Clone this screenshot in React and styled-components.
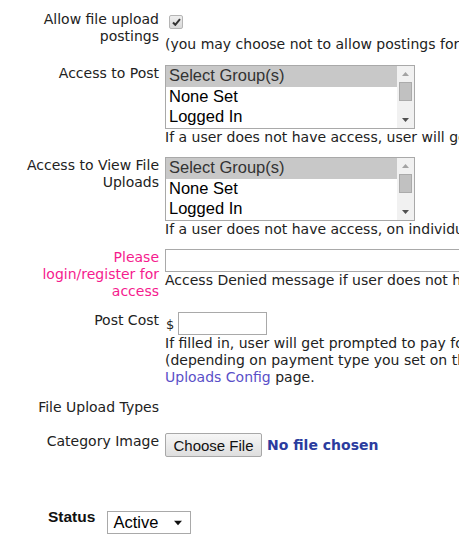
import React from 'react';
import styled, { createGlobalStyle } from 'styled-components';

const GlobalStyle = createGlobalStyle`
  html, body {
    margin: 0;
    padding: 0;
    background: #ffffff;
    overflow: hidden;
  }
  body {
    font-family: "DejaVu Sans", Verdana, sans-serif;
    font-size: 14px;
    line-height: 17px;
    color: #222;
  }
`;

const Page = styled.div`
  width: 900px;
  padding-top: 11px;
`;

const Row = styled.div`
  display: flex;
  align-items: flex-start;
  margin-top: ${({ $mt }) => $mt ?? 11}px;
  &:first-child {
    margin-top: 0;
  }
`;

const Label = styled.div`
  flex: 0 0 159px;
  text-align: right;
  color: ${({ $pink }) => ($pink ? '#f51b8e' : '#222')};
`;

const Value = styled.div`
  margin-left: 6px;
  white-space: nowrap;
`;

const Help = styled.div`
  line-height: 17px;
`;

const Link = styled.a`
  color: #5a4fc8;
  text-decoration: none;
`;

const Check = styled.span`
  display: flex;
  align-items: center;
  justify-content: center;
  width: 12px;
  height: 12px;
  margin: 4px 0 7px 4px;
  border: 1px solid #b5b5b5;
  border-radius: 2px;
  background: linear-gradient(#eeeeee, #d9d9d9);
`;

const ListBox = styled.div`
  display: flex;
  width: 248px;
  height: 62px;
  border: 1px solid #a9a9a9;
  background: #fff;
`;

const Options = styled.div`
  flex: 1;
  display: flex;
  flex-direction: column;
`;

const Option = styled.div`
  height: ${({ $h }) => $h}px;
  line-height: ${({ $h }) => $h - 3}px;
  padding-left: 3px;
  font-family: "Liberation Sans", Arial, sans-serif;
  font-size: 16.5px;
  color: ${({ $selected }) => ($selected ? '#333' : '#000')};
  background: ${({ $selected }) => ($selected ? '#c8c8c8' : 'transparent')};
`;

const Scrollbar = styled.div`
  flex: 0 0 17px;
  display: flex;
  flex-direction: column;
  align-items: center;
  background: #f1f1f1;
`;

const Arrow = styled.div`
  height: 16px;
  display: flex;
  align-items: center;
  justify-content: center;
`;

const Thumb = styled.div`
  flex: 0 0 auto;
  width: 13px;
  height: 19px;
  background: #c1c1c1;
  border: 1px solid #ababab;
  box-sizing: border-box;
`;

const TrackFill = styled.div`
  flex: 1;
`;

const TextInput = styled.div`
  width: ${({ $w }) => $w}px;
  height: 21px;
  border: 1px solid #a9a9a9;
  background: #fff;
`;

const CostLine = styled.div`
  display: flex;
  align-items: flex-start;
`;

const Dollar = styled.span`
  margin: 4px 4px 0 1px;
  font-size: 13px;
  color: #222;
`;

const FileRow = styled.div`
  display: flex;
  align-items: center;
`;

const FileButton = styled.button`
  width: 97px;
  height: 24px;
  padding: 0;
  border: 1px solid #a8a8a8;
  border-radius: 2px;
  background: linear-gradient(#f6f6f6, #dedede);
  font-family: "Liberation Sans", Arial, sans-serif;
  font-size: 15px;
  color: #111;
`;

const NoFile = styled.span`
  margin-left: 5px;
  font-weight: bold;
  font-size: 14px;
  color: #2b3c9e;
`;

const StatusRow = styled.div`
  display: flex;
  align-items: flex-start;
  margin-top: 51px;
  padding-left: 48px;
`;

const StatusLabel = styled.div`
  font-family: "Liberation Sans", Arial, sans-serif;
  font-weight: bold;
  font-size: 15.5px;
  line-height: 18px;
  color: #111;
`;

const Select = styled.div`
  display: flex;
  align-items: center;
  justify-content: space-between;
  margin-left: 12px;
  margin-top: 3px;
  width: 84px;
  height: 23px;
  padding: 0 8px 0 5px;
  box-sizing: border-box;
  border: 1px solid #a9a9a9;
  background: #fff;
  font-family: "Liberation Sans", Arial, sans-serif;
  font-size: 16.5px;
  color: #000;
`;

const Tri = ({ down, color, w = 7, h = 4 }) => (
  <svg width={w} height={h} viewBox="0 0 7 4">
    {down ? <polygon points="0,0 7,0 3.5,4" fill={color} /> : <polygon points="0,4 7,4 3.5,0" fill={color} />}
  </svg>
);

const GroupList = () => (
  <ListBox>
    <Options>
      <Option $selected $h={21}>Select Group(s)</Option>
      <Option $h={21}>None Set</Option>
      <Option $h={20}>Logged In</Option>
    </Options>
    <Scrollbar>
      <Arrow><Tri color="#a3a3a3" /></Arrow>
      <Thumb />
      <TrackFill />
      <Arrow><Tri down color="#505050" /></Arrow>
    </Scrollbar>
  </ListBox>
);

const App = () => (
  <>
    <GlobalStyle />
    <Page>
      <Row>
        <Label>Allow file upload<br />postings</Label>
        <Value>
          <Check>
            <svg width="9" height="8" viewBox="0 0 9 8">
              <path d="M1 4.5 L3.3 6.8 L8 1.2" stroke="#333" strokeWidth="2" fill="none" />
            </svg>
          </Check>
          <Help>(you may choose not to allow postings for this category)</Help>
        </Value>
      </Row>
      <Row $mt={12}>
        <Label>Access to Post</Label>
        <Value>
          <GroupList />
          <Help>If a user does not have access, user will get an Access Denied message</Help>
        </Value>
      </Row>
      <Row $mt={11}>
        <Label>Access to View File<br />Uploads</Label>
        <Value>
          <GroupList />
          <Help>If a user does not have access, on individual file pages they will see</Help>
        </Value>
      </Row>
      <Row $mt={11}>
        <Label $pink>Please<br />login/register for<br />access</Label>
        <Value>
          <TextInput $w={400} />
          <Help>Access Denied message if user does not have access to view uploads</Help>
        </Value>
      </Row>
      <Row $mt={12}>
        <Label>Post Cost</Label>
        <Value>
          <CostLine>
            <Dollar>$</Dollar>
            <TextInput $w={87} />
          </CostLine>
          <Help>If filled in, user will get prompted to pay for posting</Help>
          <Help>(depending on payment type you set on the File</Help>
          <Help><Link href="#">Uploads Config</Link> page.</Help>
        </Value>
      </Row>
      <Row $mt={13}>
        <Label>File Upload Types</Label>
        <Value />
      </Row>
      <Row $mt={17}>
        <Label>Category Image</Label>
        <Value>
          <FileRow>
            <FileButton type="button">Choose File</FileButton>
            <NoFile>No file chosen</NoFile>
          </FileRow>
        </Value>
      </Row>
      <StatusRow>
        <StatusLabel>Status</StatusLabel>
        <Select>
          <span>Active</span>
          <Tri down color="#111" w={8} h={6} />
        </Select>
      </StatusRow>
    </Page>
  </>
);

export default App;
